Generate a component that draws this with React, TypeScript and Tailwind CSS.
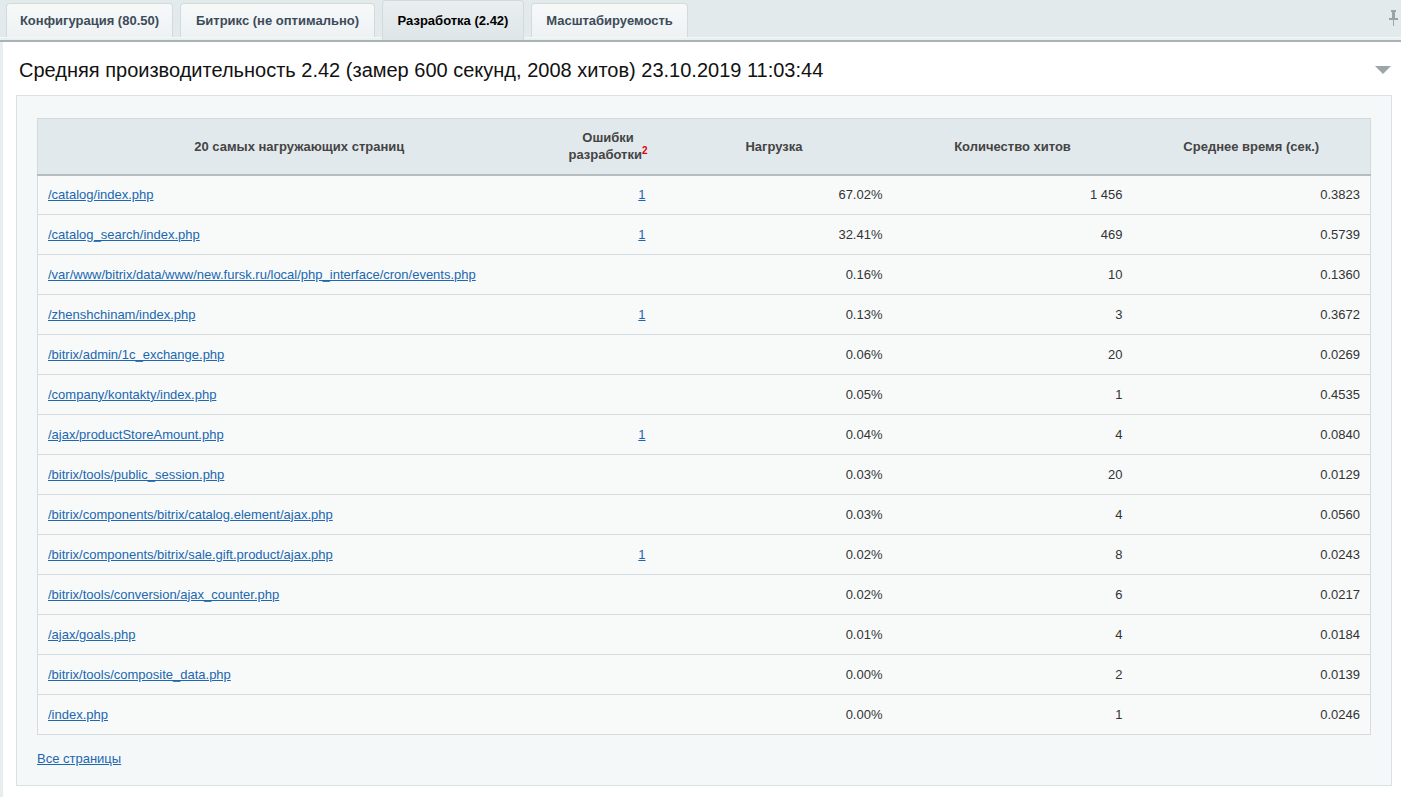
import React from "react";

interface Row {
  url: string;
  errors: string;
  load: string;
  hits: string;
  time: string;
}

const rows: Row[] = [
  { url: "/catalog/index.php", errors: "1", load: "67.02%", hits: "1 456", time: "0.3823" },
  { url: "/catalog_search/index.php", errors: "1", load: "32.41%", hits: "469", time: "0.5739" },
  { url: "/var/www/bitrix/data/www/new.fursk.ru/local/php_interface/cron/events.php", errors: "", load: "0.16%", hits: "10", time: "0.1360" },
  { url: "/zhenshchinam/index.php", errors: "1", load: "0.13%", hits: "3", time: "0.3672" },
  { url: "/bitrix/admin/1c_exchange.php", errors: "", load: "0.06%", hits: "20", time: "0.0269" },
  { url: "/company/kontakty/index.php", errors: "", load: "0.05%", hits: "1", time: "0.4535" },
  { url: "/ajax/productStoreAmount.php", errors: "1", load: "0.04%", hits: "4", time: "0.0840" },
  { url: "/bitrix/tools/public_session.php", errors: "", load: "0.03%", hits: "20", time: "0.0129" },
  { url: "/bitrix/components/bitrix/catalog.element/ajax.php", errors: "", load: "0.03%", hits: "4", time: "0.0560" },
  { url: "/bitrix/components/bitrix/sale.gift.product/ajax.php", errors: "1", load: "0.02%", hits: "8", time: "0.0243" },
  { url: "/bitrix/tools/conversion/ajax_counter.php", errors: "", load: "0.02%", hits: "6", time: "0.0217" },
  { url: "/ajax/goals.php", errors: "", load: "0.01%", hits: "4", time: "0.0184" },
  { url: "/bitrix/tools/composite_data.php", errors: "", load: "0.00%", hits: "2", time: "0.0139" },
  { url: "/index.php", errors: "", load: "0.00%", hits: "1", time: "0.0246" },
];

const tabs = [
  { label: "Конфигурация (80.50)", active: false, w: "w-[167px]" },
  { label: "Битрикс (не оптимально)", active: false, w: "w-[195px]" },
  { label: "Разработка (2.42)", active: true, w: "w-[142px]" },
  { label: "Масштабируемость", active: false, w: "w-[157px]" },
];

export default function App() {
  return (
    <div
      className="min-h-[797px] w-[1401px] overflow-hidden bg-[#e8eef0] text-[13px] text-[#333]"
      style={{ fontFamily: '"Liberation Sans", Arial, sans-serif' }}
    >
      {/* tabs */}
      <div className="relative flex h-[37px] items-end gap-[7px] bg-[#e3eaec] pl-[6px]">
        {tabs.map((t) =>
          t.active ? (
            <div
              key={t.label}
              className={`${t.w} mb-[-3px] flex h-[40px] items-center justify-center rounded-t-[4px] border border-b-0 border-[#d3dadc] bg-gradient-to-b from-[#e9eef0] to-[#dfe6e8] font-bold text-black`}
            >
              {t.label}
            </div>
          ) : (
            <div
              key={t.label}
              className={`${t.w} flex h-[34px] items-center justify-center rounded-t-[4px] border border-b-0 border-[#d3dadc] bg-gradient-to-b from-[#f7f9f9] to-[#eef2f3] font-bold text-[#3d4b59]`}
            >
              {t.label}
            </div>
          )
        )}
        <svg className="absolute right-[3px] top-[10px]" width="9" height="16" viewBox="0 0 9 16">
          <rect x="2" y="0" width="5" height="2" fill="#9aa4a8" />
          <rect x="3" y="2" width="3" height="6" fill="#9aa4a8" />
          <rect x="0" y="8" width="9" height="2" fill="#9aa4a8" />
          <rect x="4" y="10" width="1" height="6" fill="#9aa4a8" />
        </svg>
      </div>
      <div className="h-[3px] border-t border-[#f4f7f7] bg-[#eaeff0]" />
      <div className="h-[2px] bg-[#a9b2b5]" />

      {/* panel */}
      <div className="ml-[3px] bg-white pb-[12px] pl-[13px] pr-[9px]">
        <div className="relative flex h-[53px] items-center pl-[3px] pt-[2px] text-[20px] text-[#111]">
          Средняя производительность 2.42 (замер 600 секунд, 2008 хитов) 23.10.2019 11:03:44
          <svg className="absolute right-[1px] top-[24px]" width="16" height="8" viewBox="0 0 16 8">
            <polygon points="0,0 16,0 8,8" fill="#9ca5a8" />
          </svg>
        </div>

        <div className="border border-[#dbe2e4] bg-[#f5f8f9] px-5 pb-[16px] pt-[22px]">
          <table className="w-[1333px] table-fixed border-collapse">
            <colgroup>
              <col className="w-[523px]" />
              <col className="w-[95px]" />
              <col className="w-[237px]" />
              <col className="w-[240px]" />
              <col className="w-[238px]" />
            </colgroup>
            <thead>
              <tr className="h-[56px] border border-b-2 border-[#d3dadd] border-b-[#b5bdc0] bg-[#e2e9ec] font-bold text-[#444]">
                <th className="text-center">20 самых нагружающих страниц</th>
                <th className="text-center leading-[17px]">
                  Ошибки
                  <br />
                  разработки
                  <sup className="text-[10px] text-[#e00000]">2</sup>
                </th>
                <th className="text-center">Нагрузка</th>
                <th className="text-center">Количество хитов</th>
                <th className="text-center">Среднее время (сек.)</th>
              </tr>
            </thead>
            <tbody>
              {rows.map((r) => (
                <tr key={r.url} className="h-[40px] border border-[#d5dcdf] bg-[#f8fafa] text-[#333]">
                  <td className="pl-[10px]">
                    <a href="#" className="text-[#2067b0] underline">
                      {r.url}
                    </a>
                  </td>
                  <td className="pr-[10px] text-right">
                    {r.errors && (
                      <a href="#" className="text-[#2067b0] underline">
                        {r.errors}
                      </a>
                    )}
                  </td>
                  <td className="pr-[10px] text-right">{r.load}</td>
                  <td className="pr-[10px] text-right">{r.hits}</td>
                  <td className="pr-[10px] text-right">{r.time}</td>
                </tr>
              ))}
            </tbody>
          </table>
          <div className="mt-[14px]">
            <a href="#" className="text-[#2067b0] underline">
              Все страницы
            </a>
          </div>
        </div>
      </div>
    </div>
  );
}
